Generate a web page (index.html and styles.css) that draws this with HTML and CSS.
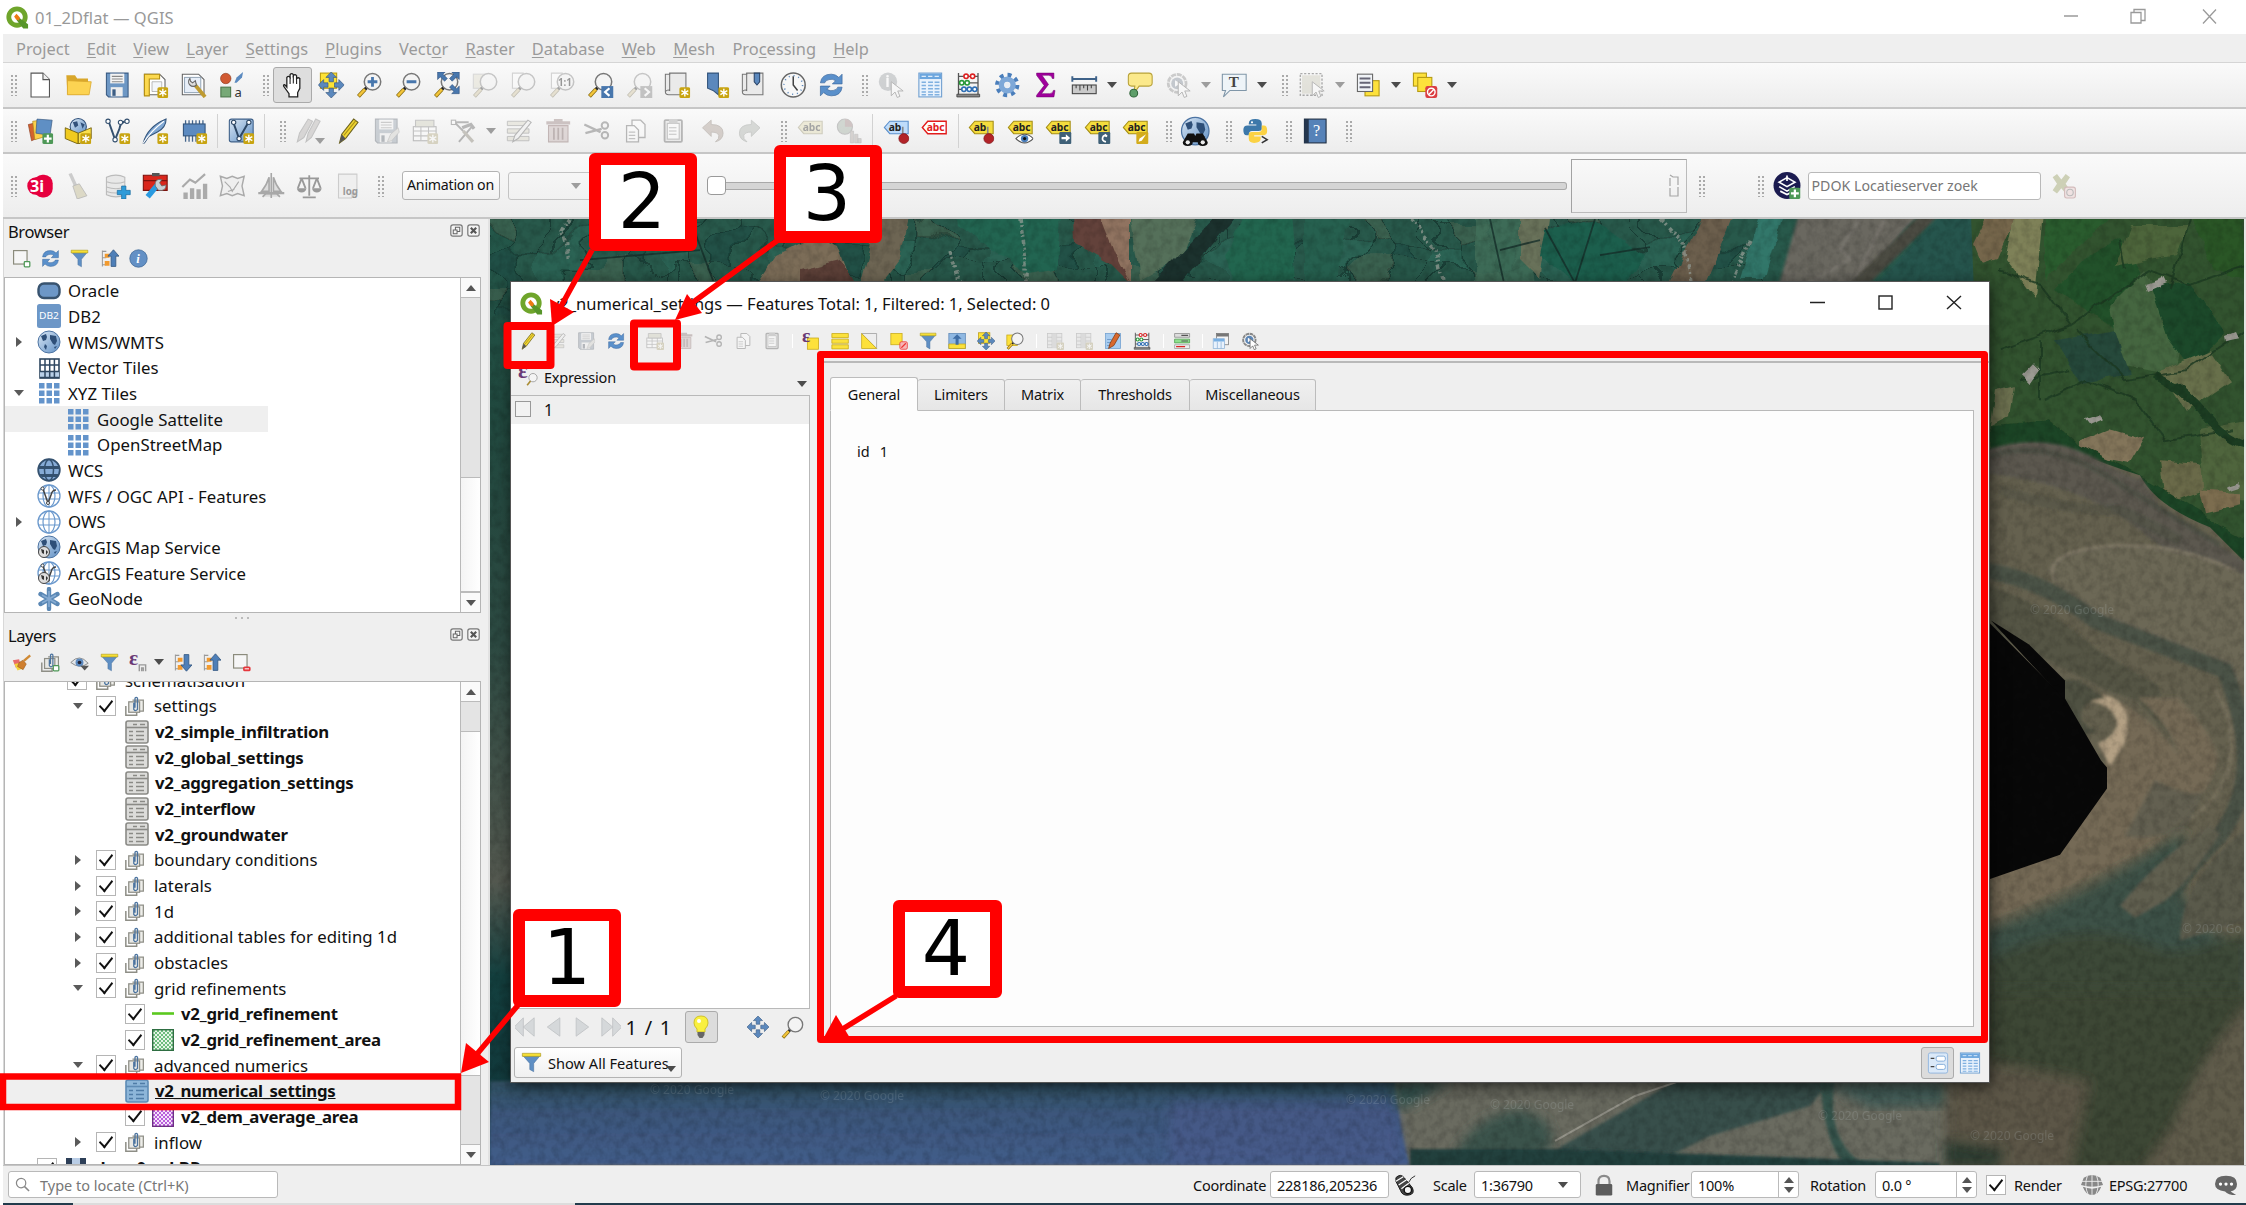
FILE: index.html
```html
<!DOCTYPE html>
<html lang="en">
<head>
<meta charset="utf-8">
<title>01_2Dflat — QGIS</title>
<link rel="stylesheet" href="styles.css">
</head>
<body>
<svg class="paints" width="0" height="0" aria-hidden="true">
<defs>
<linearGradient id="gb" x1="0" y1="0" x2="1" y2="1"><stop offset="0" stop-color="#dbe8f5"/><stop offset="1" stop-color="#5f8fc4"/></linearGradient>
<pattern id="hg" width="4" height="4" patternUnits="userSpaceOnUse"><path d="M0 0l4 4M4 0l-4 4" stroke="#4fae62" stroke-width=".8"/></pattern>
<pattern id="hp" width="4" height="4" patternUnits="userSpaceOnUse"><path d="M0 0l4 4M4 0l-4 4" stroke="#b34fd8" stroke-width=".9"/></pattern>
</defs>
</svg>
<svg class="defs" aria-hidden="true">
<symbol id="star" viewBox="0 0 24 24"><rect x="14" y="14" width="10" height="10" rx="1.5" fill="#c8a411"/><path d="M19 15.5v7M15.8 17.2l6.4 3.6M22.2 17.2l-6.4 3.6" stroke="#fff" stroke-width="1.3"/></symbol>
<symbol id="mag" viewBox="0 0 24 24"><path d="M10 14l-2 2" stroke="#222" stroke-width="3"/><path d="M8 16l-6 6.5" stroke="#8a6d10" stroke-width="3.6"/><path d="M8 16l-5.6 6" stroke="#f3c53a" stroke-width="2.2"/><circle cx="15" cy="9" r="7.6" fill="#f4f4f4" stroke="#777" stroke-width="1.4"/></symbol>
<symbol id="q" viewBox="0 0 24 24"><circle cx="11.5" cy="11.5" r="8.6" fill="none" stroke="#6fa52b" stroke-width="5"/><path d="M12 11l11 8v4.500h-5l-7-9z" fill="#57952a"/><path d="M11 8l3.500 4-1 3-3-1-2-3z" fill="#ee7913"/></symbol>
<symbol id="new" viewBox="0 0 24 24"><path d="M3.500 1h11l6 6v16h-17z" fill="#fff" stroke="#555"/><path d="M14.500 1v6h6" fill="#eee" stroke="#555"/></symbol>
<symbol id="open" viewBox="0 0 24 24"><path d="M1 3h8l2 3h10v15H2z" fill="#d9a72b"/><path d="M2 8l22 1-2 12H2z" fill="#fcd352" stroke="#d9a72b" stroke-width=".7"/></symbol>
<symbol id="save" viewBox="0 0 24 24"><path d="M2 1h20v22H4l-2-2z" fill="#6d97c4" stroke="#3c5d84"/><rect x="5.500" y="1.500" width="13" height="9" fill="#f4f4f4"/><path d="M7 4h10M7 6.500h10M7 9h10" stroke="#888" stroke-width="1"/><rect x="6" y="14" width="11" height="8.500" fill="#eee"/><rect x="7.500" y="16" width="3" height="6" fill="#3c5d84"/></symbol>
<symbol id="newlay" viewBox="0 0 24 24"><path d="M2 2h14l5 5v14H2z" fill="#fff" stroke="#666"/><path d="M2 2h14v4.500H6.500V22H2z" fill="#fcd94f" stroke="#b58f0f"/><path d="M9 9h9v9H9z" fill="#f3f6fa" stroke="#999" stroke-width=".6"/><use href="#star"/></symbol>
<symbol id="laymgr" viewBox="0 0 24 24"><path d="M1 2h15l5 5v14H1z" fill="#fff" stroke="#666"/><rect x="3" y="5" width="15" height="14" fill="#e7eef8" stroke="#9ab"/><path d="M12 11l10 12" stroke="#bf9b30" stroke-width="3.500"/><path d="M8 6a4 4 0 1 0 6 6l-1-4-2.500 2-2-1.500z" fill="#ddd" stroke="#666"/></symbol>
<symbol id="style" viewBox="0 0 24 24"><circle cx="6" cy="6" r="4.800" fill="#d15a32" stroke="#8d3c20" stroke-width=".6"/><path d="M14 10l2-5 6-5-1 5-5 5z" fill="#5b8ac0"/><rect x="1.500" y="14" width="9" height="9" fill="#77a977" stroke="#4b774b"/><text x="14" y="23" font-size="12" fill="#333">a</text></symbol>
<symbol id="hand" viewBox="0 0 24 24"><path d="M7 14V5q1.500-2 3 0V2.500q1.500-2 3 0V3.500q1.500-2 3 0V6q1.500-1.500 3 0v9l-2 4v4H9v-3l-5-7q0-3 3 1z" fill="#fff" stroke="#222" stroke-width="1.200"/><path d="M10 5v6M13 3.500v7M16 5v6" stroke="#222"/></symbol>
<symbol id="arr4" viewBox="0 0 24 24"><path d="M12 0l5 5h-3v4h-4V5H7zM12 24l5-5h-3v-4h-4v4H7zM0 12l5-5v3h4v4H5v3zM24 12l-5-5v3h-4v4h4v3z" fill="#5b88bd" stroke="#34557c" stroke-width=".6"/></symbol>
<symbol id="pan" viewBox="0 0 24 24"><rect x="2" y="1" width="15" height="14" fill="#fde335" stroke="#bb9b10"/><use href="#arr4"/></symbol>
<symbol id="zin" viewBox="0 0 24 24"><use href="#mag"/><path d="M15 4.500v9M10.500 9h9" stroke="#4877ad" stroke-width="2.600"/></symbol>
<symbol id="zout" viewBox="0 0 24 24"><use href="#mag"/><path d="M10.500 9h9" stroke="#4877ad" stroke-width="2.800"/></symbol>
<symbol id="zfull" viewBox="0 0 24 24"><use href="#mag"/><path d="M4 0h7l-2 2 4 4-2.500 2.500-4-4-2.500 2.500zM24 0h-7l2 2-4 4 2.500 2.500 4-4L24 7zM24 20h-7l2-2-4-4 2.500-2.500 4 4L24 13z" fill="#4877ad" stroke="#2c4d77" stroke-width=".5"/></symbol>
<symbol id="zsel" viewBox="0 0 24 24"><rect x="1" y="2" width="13" height="13" fill="#e8dc9a" stroke="#aaa"/><use href="#mag"/></symbol>
<symbol id="zlay" viewBox="0 0 24 24"><path d="M2 1h10v14H2z" fill="#fff" stroke="#999"/><use href="#mag"/></symbol>
<symbol id="znat" viewBox="0 0 24 24"><use href="#zlay"/><text x="8" y="12.500" font-size="9" font-weight="bold">1:1</text></symbol>
<symbol id="zlast" viewBox="0 0 24 24"><use href="#mag"/><rect x="13" y="13" width="11" height="11" fill="#4877ad"/><path d="M20.500 15l-4 3.500 4 3.500" fill="none" stroke="#fff" stroke-width="2"/></symbol>
<symbol id="znext" viewBox="0 0 24 24"><use href="#mag"/><rect x="13" y="13" width="11" height="11" fill="#777"/><path d="M17 15l4 3.500-4 3.500" fill="none" stroke="#fff" stroke-width="2"/></symbol>
<symbol id="scroll" viewBox="0 0 24 24"><path d="M5 1h15v20H4q-3 0-3-3V2h4z" fill="#eaeaea" stroke="#777"/><path d="M5 1v16q-2-1-4 1" fill="none" stroke="#777"/></symbol>
<symbol id="newmap" viewBox="0 0 24 24"><use href="#scroll"/><use href="#star"/></symbol>
<symbol id="bmnew" viewBox="0 0 24 24"><path d="M4 1h10v20l-5-4-5-2z" fill="#5b88bd" stroke="#34557c"/><use href="#star"/></symbol>
<symbol id="bm" viewBox="0 0 24 24"><use href="#scroll"/><path d="M12 1h5v8l-2.500 3L12 9z" fill="#5b88bd" stroke="#2a4468"/></symbol>
<symbol id="clock" viewBox="0 0 24 24"><circle cx="12" cy="12" r="11" fill="#f7f7f7" stroke="#666" stroke-width="1.400"/><path d="M12 4v8l4 5" fill="none" stroke="#444" stroke-width="1.400"/><circle cx="12" cy="12" r="8.600" fill="none" stroke="#5b88bd" stroke-dasharray="1 3.500" stroke-width="1.400"/></symbol>
<symbol id="refresh" viewBox="0 0 24 24"><path d="M2 10q1-8 10-8 4 0 7 3l3-3v9h-9l3-3q-3-2-6-1-4 1-4 3z" fill="#5a90cb" stroke="#37649a" stroke-width=".6"/><path d="M22 14q-1 8-10 8-4 0-7-3l-3 3v-9h9l-3 3q3 2 6 1 4-1 4-3z" fill="#5a90cb" stroke="#37649a" stroke-width=".6"/></symbol>
<symbol id="cur" viewBox="0 0 24 24"><path d="M12 9v13l3.500-3.500 2 5 2.500-1-2-5h5z" fill="#fff" stroke="#555" stroke-width=".9"/></symbol>
<symbol id="ident" viewBox="0 0 24 24"><circle cx="9" cy="9" r="8.500" fill="#8a99a8"/><text x="6.500" y="14" font-size="14" font-weight="bold" fill="#fff">i</text><use href="#cur"/></symbol>
<symbol id="table" viewBox="0 0 24 24"><rect x="1.500" y="1" width="21" height="22" fill="#e9f2fc" stroke="#6f9fd0"/><rect x="2" y="1.500" width="20" height="5" fill="#6ca6de"/><path d="M4 4h4M10 4h4M16 4h4" stroke="#dcebfa"/><path d="M4 9.500h4M10 9.500h4.500M16 9.500h4.500M4 12.500h4M10 12.500h4.500M16 12.500h4.500M4 15.500h4M10 15.500h4.500M16 15.500h4.500M4 18.500h4M10 18.500h4.500M16 18.500h4.500M4 21h4M10 21h4.500M16 21h4.500" stroke="#7fb0e0" stroke-width="1.300"/></symbol>
<symbol id="aba" viewBox="0 0 24 24"><path d="M3 1v21M21 1v21M3 4h18M3 10h18M3 16h18" fill="none" stroke="#555" stroke-width="1.200"/><path d="M1.500 20.500h21v2.500h-21z" fill="#888" stroke="#444" stroke-width=".8"/><g fill="#fff" stroke-width="1.500"><g stroke="#d22"><circle cx="10" cy="4" r="2"/><circle cx="16" cy="4" r="2"/></g><g stroke="#2a9a3a"><circle cx="6" cy="10" r="2"/><circle cx="11" cy="10" r="2"/></g><g stroke="#2f6fb5"><circle cx="8" cy="16" r="2"/><circle cx="13" cy="16" r="2"/><circle cx="18" cy="16" r="2"/></g></g></symbol>
<symbol id="gear" viewBox="0 0 24 24"><circle cx="12" cy="12" r="9.200" fill="none" stroke="#4a7ebb" stroke-width="4" stroke-dasharray="3.600 3.620"/><circle cx="12" cy="12" r="5.400" fill="none" stroke="#7ea8d8" stroke-width="5"/><circle cx="12" cy="12" r="2.600" fill="#e9eef5"/></symbol>
<symbol id="sum" viewBox="0 0 24 24"><path d="M4 1h16v5h-1.500Q18 3 15 3H9l6 8.500L8.500 20H16q3 0 3.500-3H21l-1 6H4v-1.500l7-9L4 3z" fill="#a0009c" stroke="#70006d" stroke-width=".5"/></symbol>
<symbol id="ruler" viewBox="0 0 24 24"><path d="M1 6.500h22M1 4v5M23 4v5" stroke="#3e6289" stroke-width="1.800"/><rect x="1" y="12" width="22" height="8" fill="#c9c9c9" stroke="#444"/><path d="M4.500 12v3M8 12v5M11.500 12v3M15 12v5M18.500 12v3" stroke="#444"/></symbol>
<symbol id="tip" viewBox="0 0 24 24"><path d="M4 1h16q3 0 3 3v6q0 3-3 3H11l-5 7 1-7H4q-3 0-3-3V4q0-3 3-3z" fill="#fbe98b" stroke="#b8a23a"/><circle cx="6" cy="19.500" r="3.600" fill="#5e9e6a" stroke="#33663c"/></symbol>
<symbol id="run" viewBox="0 0 24 24"><circle cx="11" cy="10.500" r="8" fill="#e4e8ea" stroke="#888" stroke-width="3" stroke-dasharray="4.500 .8"/><circle cx="11" cy="10.500" r="7" fill="#f1f1f1"/><circle cx="11" cy="10.500" r="5.500" fill="#5d86b5"/><path d="M9 7.500l5 3-5 3z" fill="#fff"/><use href="#cur"/></symbol>
<symbol id="tann" viewBox="0 0 24 24"><path d="M1 2h22v15H8l-6 6 2-6H1z" fill="#eef4f8" stroke="#8096a8"/><text x="7" y="14" font-size="14" font-weight="bold" font-family="Liberation Serif,serif" fill="#444">T</text></symbol>
<symbol id="sel" viewBox="0 0 24 24"><rect x="1" y="1.500" width="20" height="20" fill="none" stroke="#333" stroke-width="1.300" stroke-dasharray="2 1.500"/><rect x="2.500" y="3" width="17" height="17" fill="#cfc88c"/><use href="#cur"/></symbol>
<symbol id="self" viewBox="0 0 24 24"><rect x="9" y="8" width="13" height="14" fill="#fde13b" stroke="#b59a12"/><rect x="2" y="2" width="14" height="16" fill="#f0f3f7" stroke="#666"/><path d="M4 6h10M4 10h10M4 14h10" stroke="#667" stroke-width="1.800"/></symbol>
<symbol id="desel" viewBox="0 0 24 24"><rect x="2" y="1" width="12" height="12" fill="#fde13b" stroke="#b59a12"/><rect x="6" y="5" width="13" height="13" fill="#fde13b" stroke="#b59a12"/><rect x="13" y="13" width="11" height="11" rx="2" fill="#db3d42"/><circle cx="18.500" cy="18.500" r="3.500" fill="none" stroke="#fff" stroke-width="1.300"/><path d="M16 21l5-5" stroke="#fff" stroke-width="1.300"/></symbol>
<symbol id="plus" viewBox="0 0 24 24"><rect x="14" y="14" width="10" height="10" rx="1.500" fill="#4e9857"/><path d="M19 15.500v7M15.500 19h7" stroke="#fff" stroke-width="2"/></symbol>
<symbol id="dsm" viewBox="0 0 24 24"><path d="M1 6l9-2 3 13-9 4z" fill="#d3622d" stroke="#8d3c20" stroke-width=".6"/><path d="M5 3l8-1 4 15-10 3z" fill="#fbd04b" stroke="#a8861d" stroke-width=".6"/><path d="M9 1l14 1-2 14-13-2z" fill="#5f8fc4" stroke="#37567d" stroke-width=".6"/><use href="#plus"/></symbol>
<symbol id="box" viewBox="0 0 24 24"><circle cx="12" cy="8" r="7.500" fill="url(#gb)" stroke="#31507a"/><path d="M7 4l4-1 1 4-3 2zM14 4l4 2-2 4z" fill="#31507a"/><path d="M0 9l12 5v10L0 19z" fill="#f0ca1f" stroke="#6d5a08" stroke-width=".8"/><path d="M24 9l-12 5v10l12-5z" fill="#fbe04c" stroke="#6d5a08" stroke-width=".8"/><use href="#star"/></symbol>
<symbol id="vec" viewBox="0 0 24 24"><path d="M4 3l6 17 4-10q1-7 7-7" fill="none" stroke="#34506f" stroke-width="1.800"/><g fill="#fff" stroke="#34506f"><circle cx="3.500" cy="3" r="2"/><circle cx="10" cy="20" r="2"/><circle cx="15" cy="4" r="2"/><circle cx="21" cy="3" r="2"/></g><use href="#star"/></symbol>
<symbol id="feather" viewBox="0 0 24 24"><path d="M1 23Q5 8 22 1q0 8-8 12l-8 4-4 6z" fill="#80a8d4" stroke="#34557c"/><path d="M1 23Q8 12 20 3" stroke="#fff" fill="none"/><use href="#star"/></symbol>
<symbol id="chip" viewBox="0 0 24 24"><path d="M4 2v20M7.200 2v20M10.400 2v20M13.600 2v20M16.800 2v20M20 2v20" stroke="#44658c" stroke-width="1.200"/><rect x="2" y="5.500" width="20" height="11" fill="#5c8ac0" stroke="#34557c"/><use href="#star"/></symbol>
<symbol id="newv" viewBox="0 0 24 24"><rect x="1" y="1" width="22" height="21" rx="2" fill="url(#gb)" stroke="#3d5f88"/><path d="M5 5l5 14 8-14" fill="none" stroke="#2d4765" stroke-width="1.800"/><g fill="#fff" stroke="#2d4765"><circle cx="5" cy="4" r="2"/><circle cx="10" cy="19" r="2"/><circle cx="19" cy="4" r="2"/></g><use href="#star"/></symbol>
<symbol id="pen" viewBox="0 0 24 24"><path d="M4 23l2-8L17 1l4 3L9.500 19z" fill="#f2d631" stroke="#6e6420"/><path d="M4 23l2-8 3.500 4z" fill="#555"/><path d="M8 16L19 2.500" stroke="#a9931a"/></symbol>
<symbol id="pens" viewBox="0 0 24 24"><path d="M1 22l2-8L11 1l4 2L7 18zM9 22l2-8 7-13 4 2-8 15z" fill="#b3a5a0" stroke="#777"/></symbol>
<symbol id="savee" viewBox="0 0 24 24"><use href="#save"/><path d="M13 22l3-7 7-6 1 4-7 8z" fill="#ccb" stroke="#777" stroke-width=".6"/></symbol>
<symbol id="addrec" viewBox="0 0 24 24"><rect x="1" y="8" width="21" height="13" fill="#fff" stroke="#666"/><path d="M3 2h17v6H3z" fill="#cc8" stroke="#777"/><path d="M1 12h21M1 16.500h21M8 8v13M15 8v13" stroke="#777"/><use href="#star"/></symbol>
<symbol id="vert" viewBox="0 0 24 24"><path d="M3 4h14M4 4l8 8M8 22l12-14" stroke="#555" stroke-width="1.800"/><path d="M12 12l9 10" stroke="#887744" stroke-width="3"/><path d="M11 9l8-3 3 4" fill="none" stroke="#555" stroke-width="3"/><rect x="1" y="2" width="4" height="4" fill="#fff" stroke="#555"/></symbol>
<symbol id="multi" viewBox="0 0 24 24"><path d="M1 3h20v4H1zM1 10h20v4H1zM1 17h20v4H1z" fill="#ddd49a" stroke="#666" stroke-width=".8"/><path d="M6 22l2-6L20 2l3 2L11 19z" fill="#eee" stroke="#555"/></symbol>
<symbol id="trash" viewBox="0 0 24 24"><path d="M3 7h18v15H3z" fill="#e4a09e" stroke="#b04541"/><path d="M1 3h22v3H1zM8 1h8v2H8z" fill="#b96360"/><path d="M8 9v11M12 9v11M16 9v11" stroke="#96403c" stroke-width="1.600"/></symbol>
<symbol id="cut" viewBox="0 0 24 24"><path d="M1 6l15 7M2 14l15-4" stroke="#555" stroke-width="2.200"/><circle cx="20" cy="7" r="3" fill="none" stroke="#555" stroke-width="1.800"/><circle cx="20" cy="16" r="3" fill="none" stroke="#555" stroke-width="1.800"/></symbol>
<symbol id="copy" viewBox="0 0 24 24"><path d="M9 2h8l4 4v12H9z" fill="#fff" stroke="#555" stroke-width="1.200"/><path d="M4 7h7l4 4v11H4z" fill="#fff" stroke="#555" stroke-width="1.200"/><path d="M6 13h6M6 16h6M6 19h6" stroke="#777"/></symbol>
<symbol id="paste" viewBox="0 0 24 24"><rect x="4" y="2" width="16" height="20" rx="1" fill="#ddd" stroke="#555" stroke-width="1.700"/><rect x="6.500" y="5" width="11" height="14.500" fill="#fff" stroke="#777"/><path d="M8 1h8v4H8z" fill="#999"/><path d="M8 9h7M8 12h7M8 15h7" stroke="#777"/></symbol>
<symbol id="undo" viewBox="0 0 24 24"><path d="M3 9l8-7v4q11 0 11 8 0 6-7 8 4-3 3-6t-7-3v4z" fill="#c58b66" stroke="#8d6744" stroke-width=".8"/></symbol>
<symbol id="redo" viewBox="0 0 24 24"><path d="M21 9l-8-7v4Q2 6 2 14q0 6 7 8-4-3-3-6t7-3v4z" fill="#9fae9c" stroke="#788875" stroke-width=".8"/></symbol>
<symbol id="tagy" viewBox="0 0 24 24"><path d="M6 3h17v11.500H6L1 8.700z" fill="#f4dc3d" stroke="#a58e14"/><text x="5" y="12.300" font-size="9.500" font-weight="bold" fill="#222">abc</text></symbol>
<symbol id="tagr" viewBox="0 0 24 24"><path d="M6 3h17v11.500H6L1 8.700z" fill="#fff" stroke="#e21c1c" stroke-width="1.300"/><text x="5" y="12.300" font-size="9.500" font-weight="bold" fill="#e21c1c">abc</text></symbol>
<symbol id="ball" viewBox="0 0 24 24"><path d="M18 8v9" stroke="#888" stroke-width="1.500"/><circle cx="19" cy="19" r="4.600" fill="#b22328" stroke="#7c1215" stroke-width=".6"/></symbol>
<symbol id="tagb" viewBox="0 0 24 24"><path d="M6 3h17v11.500H6L1 8.700z" fill="#bfdcfb" stroke="#5a8fcb"/><text x="5" y="12.300" font-size="9.500" font-weight="bold" fill="#222">ab</text><use href="#ball"/></symbol>
<symbol id="tagyb" viewBox="0 0 24 24"><path d="M6 3h17v11.500H6L1 8.700z" fill="#f4dc3d" stroke="#a58e14"/><text x="5" y="12.300" font-size="9.500" font-weight="bold" fill="#222">ab</text><use href="#ball"/></symbol>
<symbol id="eye" viewBox="0 0 24 24"><path d="M8 19q8-8 16 0-8 8-16 0z" fill="#fff" stroke="#555"/><circle cx="16" cy="19" r="3.400" fill="#4a7ebb"/><circle cx="16" cy="19" r="1.500" fill="#111"/></symbol>
<symbol id="tage" viewBox="0 0 24 24"><use href="#tagy"/><use href="#eye"/></symbol>
<symbol id="tagm" viewBox="0 0 24 24"><use href="#tagy"/><rect x="13" y="13" width="11" height="11" rx="1" fill="#3f6077"/><path d="M15 17.500h4V15l4 3.500-4 3.500v-2.500h-4z" fill="#fff"/></symbol>
<symbol id="tagt" viewBox="0 0 24 24"><use href="#tagy"/><rect x="13" y="13" width="11" height="11" rx="1" fill="#3f6077"/><path d="M20 22q-4-1-3-4t4-1l-2-2" fill="none" stroke="#fff" stroke-width="1.600"/></symbol>
<symbol id="tagp" viewBox="0 0 24 24"><use href="#tagy"/><rect x="13" y="13" width="11" height="11" rx="1" fill="#d3ac1c"/><path d="M15 22l1-3 6-4-4 6z" fill="#fff"/></symbol>
<symbol id="pie" viewBox="0 0 24 24"><circle cx="8" cy="8" r="7" fill="#7fae7f" stroke="#777"/><path d="M8 8V1a7 7 0 0 1 7 7z" fill="#c66"/><path d="M13 12h3v11h-3zM17 15h3v8h-3zM20 19h3v4h-3z" fill="#b98" stroke="#777" stroke-width=".6"/></symbol>
<symbol id="globe" viewBox="0 0 24 24"><circle cx="12" cy="12" r="11" fill="url(#gb)" stroke="#4d74a3"/><path d="M4 6l5-2 1 3-1 3-3 1zM13 5l6 1 1 5-2 4-2-1-3-5zM8 14l2 2-1 4-2-3zM17 17l3-1-2 3z" fill="#2e4f78"/></symbol>
<symbol id="bino" viewBox="0 0 24 24"><use href="#globe"/><path d="M6 14h5l1 2 1-2h5l4 7q0 3-4 3t-4-3h-4q0 3-4 3t-4-3z" fill="#111"/><circle cx="6" cy="21" r="1.700" fill="#eee"/><circle cx="18" cy="21" r="1.700" fill="#eee"/></symbol>
<symbol id="py" viewBox="0 0 24 24"><path d="M6 5q0-4 6-4t6 4v5q0 2-3 2H9q-3 0-3 4H4q-3 0-3-5 0-4 4-4h8V6H6z" fill="#3c78aa"/><path d="M18 7h2q3 0 3 5 0 4-4 4h-8v1h6v2q0 4-6 4-5 0-5-4v-4q0-2 3-2h6q3 0 3-3z" fill="#fbd244"/><circle cx="9" cy="4" r="1" fill="#fff"/><path d="M18 17l5 3-5 3" stroke="#333" fill="none" stroke-width="1.400"/></symbol>
<symbol id="help" viewBox="0 0 24 24"><rect x="2" y="1" width="20" height="22" fill="#5682b8" stroke="#1f2e42"/><path d="M2 1h4v22H2z" fill="#24364e"/><text x="10" y="17" font-size="15" font-family="Liberation Serif,serif" fill="#fff">?</text></symbol>
<symbol id="i3" viewBox="0 0 24 24"><circle cx="8" cy="12" r="8" fill="#e6003e"/><rect x="6" y="1.500" width="17.500" height="21" rx="8" fill="#e6003e"/><text x="2.500" y="17.500" font-size="15" font-weight="bold" fill="#fff">3i</text></symbol>
<symbol id="broom" viewBox="0 0 24 24"><path d="M3 1l3-1 5 11-3 1z" fill="#bbb"/><path d="M7 12l6-2 7 11-9 3z" fill="#d4cfb4" stroke="#999" stroke-width=".7"/></symbol>
<symbol id="db" viewBox="0 0 24 24"><path d="M2 4q9-4 17 0v16q-8 4-17 0z" fill="#e8e8e8" stroke="#bbb"/><path d="M2 8q9 3 17 0M2 13q9 3 17 0M2 17q9 3 17 0" fill="none" stroke="#bbb"/><path d="M16 12h4v4h4v4h-4v4h-4v-4h-4v-4h4z" fill="#2f9bd8" stroke="#16679a" stroke-width=".6"/></symbol>
<symbol id="tbx" viewBox="0 0 24 24"><path d="M1 2h22v14H1z" fill="#d9261c" stroke="#7c120c"/><path d="M1 7h22" stroke="#7c120c"/><path d="M9 0h7v3H9z" fill="#555"/><path d="M5 22l9-11" stroke="#2a9ae0" stroke-width="5"/><path d="M12 12q-1-7 6-6l-2 3 2 3 4-1q0 6-7 5z" fill="#c9d0d5" stroke="#666" stroke-width=".7"/></symbol>
<symbol id="chart" viewBox="0 0 24 24"><path d="M2 18h4v6H2zM8 14h4v10H8zM14 15h4v9h-4zM20 10h4v14h-4z" fill="#aaa"/><path d="M1 13l7-7 5 3 9-8" fill="none" stroke="#aaa" stroke-width="2"/></symbol>
<symbol id="mapi" viewBox="0 0 24 24"><path d="M1 3l6 2 5-2 5 2 6-2-2 9 2 9-6-2-5 2-5-2-6 2 2-9z" fill="#efefef" stroke="#aaa" stroke-width="1.300"/><path d="M5 8l5 5 2 4 6-9M8 17l6-2" fill="none" stroke="#aaa"/></symbol>
<symbol id="sail" viewBox="0 0 24 24"><path d="M12 0v23M10 4v13H3q5-6 7-13zM14 4v13h7q-5-6-7-13zM4 22l3-3h10l3 3" fill="#ddd" stroke="#a8a8a8" stroke-width="1.500"/><path d="M0 18.500h24" stroke="#a8a8a8" stroke-width="2"/></symbol>
<symbol id="bal" viewBox="0 0 24 24"><path d="M12 2v19M6 22.500h12M3 5h18M5 5L1.500 14M5 5l3.500 9M19 5l-3.500 9M19 5l3.500 9" stroke="#999" stroke-width="1.700"/><path d="M.5 14h9q-1 4-4.500 4T.5 14zM14.500 14h9q-1 4-4.500 4t-4.500-4z" fill="#999"/></symbol>
<symbol id="log" viewBox="0 0 24 24"><path d="M3 1h17v17l-5 5H3z" fill="#efefef" stroke="#ccc"/><path d="M20 18h-5v5z" fill="#ccc"/><text x="7" y="20" font-size="9" font-weight="bold" fill="#999">log</text></symbol>
<symbol id="pdok" viewBox="0 0 24 24"><circle cx="12" cy="12" r="12" fill="#1b1b50"/><path d="M12 3v5M5 9l7-4 7 4-7 4zM5 13l7 4 7-4M6 17l6 3 6-3" fill="none" stroke="#fff" stroke-width="1.500"/><use href="#plus"/></symbol>
<symbol id="clrx" viewBox="0 0 24 24"><path d="M2 4l4-3 4 5 4-5 4 3-4 6 4 6-4 3-4-5-4 5-4-3 4-6z" fill="#cdd0b6"/><rect x="13" y="13" width="10" height="10" rx="2" fill="#efe2e2" stroke="#d3bcbc"/><circle cx="18" cy="18" r="3" fill="none" stroke="#bbb"/></symbol>
<symbol id="addl" viewBox="0 0 24 24"><rect x="2" y="2" width="17" height="17" fill="#f6f6f6" stroke="#8b8b7c" stroke-width="1.500"/><rect x="15.500" y="16" width="7" height="6.500" rx="1" fill="#fff" stroke="#4e9857" stroke-width="1.600"/></symbol>
<symbol id="reml" viewBox="0 0 24 24"><rect x="2" y="2" width="17" height="17" fill="#f6f6f6" stroke="#8b8b7c" stroke-width="1.500"/><rect x="14" y="17" width="9.500" height="6" rx="2" fill="#e5373c"/><path d="M16 20h5.500" stroke="#fff" stroke-width="1.300"/></symbol>
<symbol id="fun" viewBox="0 0 24 24"><path d="M2 4h20l-7.500 9v9.500L10 20v-7z" fill="#5f8fc4" stroke="#49719e" stroke-width=".6"/><path d="M1.500 1.500h21v3.500h-21z" fill="#f6df35" stroke="#a6921a" stroke-width=".7"/></symbol>
<symbol id="treeu" viewBox="0 0 24 24"><path d="M3 2v20M3 3h5M3 11h5M3 20h5" stroke="#999" stroke-width="1.300"/><path d="M6 6h6v5H6zM6 15h6v6H6z" fill="#f29a2e"/><path d="M17 1l7 8h-4v13h-6V9h-4z" fill="#4e7fb8" stroke="#33567f"/></symbol>
<symbol id="treed" viewBox="0 0 24 24"><path d="M3 2v20M3 3h5M3 11h5M3 20h5" stroke="#999" stroke-width="1.300"/><path d="M6 6h6v5H6zM6 15h6v6H6z" fill="#f29a2e"/><path d="M17 23l7-8h-4V2h-6v13h-4z" fill="#4e7fb8" stroke="#33567f"/></symbol>
<symbol id="info" viewBox="0 0 24 24"><circle cx="12" cy="12" r="11" fill="#6390c5" stroke="#426a99"/><text x="9" y="18" font-size="16" font-weight="bold" font-style="italic" font-family="Liberation Serif,serif" fill="#fff">i</text></symbol>
<symbol id="brush" viewBox="0 0 24 24"><path d="M1 9l8-1 2 8-6 3z" fill="#e86a6a"/><path d="M3 14l10-2v8l-6 2z" fill="#f5d23c"/><path d="M9 12l5-3 4 5-4 7-7-4z" fill="#cf7f2f" stroke="#935313" stroke-width=".7"/><path d="M15 10l8-7" stroke="#d08a35" stroke-width="3"/></symbol>
<symbol id="grp" viewBox="0 0 24 24"><path d="M1 12v11h13v-4" fill="none" stroke="#8e8e86" stroke-width="1.800"/><path d="M9 5h13v13h-4" fill="#eeeeea" stroke="#8e8e86" stroke-width="1.500"/><rect x="4.500" y="7" width="13" height="12.500" fill="#e8e8e4" stroke="#8e8e86" stroke-width="1.500"/><path d="M10.500 8v8q2 3 4.500 0V2.500q-1.500-2-3 0V14" fill="none" stroke="#4b739f" stroke-width="1.500"/></symbol>
<symbol id="grpadd" viewBox="0 0 24 24"><use href="#grp"/><rect x="15.500" y="16" width="7" height="6.500" rx="1" fill="#fff" stroke="#4e9857" stroke-width="1.600"/></symbol>
<symbol id="veye" viewBox="0 0 24 24"><path d="M1 12q11-12 22 1-11 8-22-1z" fill="#e2e5e8" stroke="#777"/><circle cx="12" cy="12" r="5" fill="#5c8ac0"/><circle cx="12" cy="12" r="2.300" fill="#223"/><path d="M13 16h11l-5.500 6z" fill="#555"/></symbol>
<symbol id="eps" viewBox="0 0 24 24"><text x="0" y="15" font-size="27" font-weight="bold" font-family="Liberation Serif,serif" fill="#6a3a76">ε</text><path d="M13 23v-8h8v8M16 23v-4h2v4" fill="none" stroke="#999" stroke-width="1.800"/></symbol>
<symbol id="epsm" viewBox="0 0 24 24"><text x="0" y="14" font-size="27" font-weight="bold" font-family="Liberation Serif,serif" fill="#6a3a76">ε</text><circle cx="18" cy="14" r="5" fill="#f4f4f4" stroke="#999"/><path d="M15 18l-4 5" stroke="#a98b32" stroke-width="2"/></symbol>
<symbol id="epss" viewBox="0 0 24 24"><rect x="7" y="8" width="15" height="15" fill="#fde13b" stroke="#c5a817"/><text x="0" y="13" font-size="26" font-weight="bold" font-family="Liberation Serif,serif" fill="#6a3a76">ε</text></symbol>
<symbol id="selall" viewBox="0 0 24 24"><path d="M1 2h22v5.500H1zM1 9.500h22V15H1zM1 17h22v5.500H1z" fill="#fbe13c" stroke="#c5a817"/></symbol>
<symbol id="inv" viewBox="0 0 24 24"><path d="M2 2h20v20z" fill="#eee" stroke="#999"/><path d="M2 2v20h20z" fill="#fde13b" stroke="#c5a817"/></symbol>
<symbol id="dsl" viewBox="0 0 24 24"><rect x="1" y="2" width="15" height="15" fill="#fde13b" stroke="#c5a817"/><rect x="13" y="13" width="10" height="10" rx="2" fill="#f6b7b7" stroke="#e33"/><path d="M15 21l6-6" stroke="#e33" stroke-width="1.500"/></symbol>
<symbol id="mtop" viewBox="0 0 24 24"><rect x="1" y="2" width="22" height="20" fill="#8fb8e2" stroke="#5b86b5"/><path d="M1 16h22v6H1z" fill="#fbe13c" stroke="#c5a817"/><path d="M12 3l6 6h-4v8h-4V9H6z" fill="#3f6ea6"/></symbol>
<symbol id="zys" viewBox="0 0 24 24"><rect x="1" y="4" width="14" height="14" fill="#fde13b" stroke="#c5a817"/><use href="#mag"/></symbol>
<symbol id="form" viewBox="0 0 24 24"><rect x="2" y="2" width="19" height="19" fill="#ddd" stroke="#888"/><path d="M2 7h19M2 12h19M2 17h19M8 2v19M14 2v19" stroke="#888"/><path d="M8 2h6v19H8z" fill="#bbb"/><use href="#star"/></symbol>
<symbol id="fedit" viewBox="0 0 24 24"><rect x="2" y="2" width="20" height="20" fill="#a8ccef" stroke="#6f9fd0"/><path d="M4 10h6M4 14h6M4 18h6" stroke="#5d8cbf"/><path d="M6 22l2-7L16 1l5 3-8 14z" fill="#d8682d" stroke="#7f3913"/></symbol>
<symbol id="cond" viewBox="0 0 24 24"><path d="M2 2h20v5H2z" fill="#ddd" stroke="#888"/><path d="M2 9.500h20v5H2z" fill="#8fe08f" stroke="#4b9c4b"/><path d="M2 17h20v5H2z" fill="#eee" stroke="#999"/><path d="M11 4.500h9M11 12h9" stroke="#555" stroke-width="1.500"/><path d="M4 19.500h12" stroke="#d22" stroke-width="1.500"/></symbol>
<symbol id="dock" viewBox="0 0 24 24"><rect x="6" y="2" width="16" height="15" fill="#f4f4f4" stroke="#777"/><path d="M6 2h16v4H6z" fill="#777"/><rect x="1.500" y="9" width="15" height="13" fill="#e9f2fc" stroke="#8db2d8"/><path d="M2 9h14v3.500H2z" fill="#79b0e3"/><path d="M7 13v9M12 13v9" stroke="#8db2d8"/></symbol>
<symbol id="lay" viewBox="0 0 24 24"><rect x="1" y="1" width="22" height="22" rx="2" fill="#dcdcda" stroke="#8a8a86" stroke-width="1.600"/><path d="M1 7.500h22" stroke="#8a8a86" stroke-width="1.600"/><path d="M8 4.500h4M15 4.500h5M4 11.500h4M11 11.500h8M4 15.500h4M11 15.500h8M4 19.500h4M11 19.500h8" stroke="#8a8a86" stroke-width="1.500"/></symbol>
<symbol id="layb" viewBox="0 0 24 24"><rect x="1" y="1" width="22" height="22" rx="2" fill="#8db6d9" stroke="#5d8bb5" stroke-width="1.600"/><path d="M1 7.500h22" stroke="#5d8bb5" stroke-width="1.600"/><path d="M8 4.500h4M15 4.500h5M4 11.500h4M11 11.500h8M4 15.500h4M11 15.500h8M4 19.500h4M11 19.500h8" stroke="#4f7ca7" stroke-width="1.500"/></symbol>
<symbol id="ora" viewBox="0 0 24 24"><rect x="1.500" y="4.500" width="21" height="14.500" rx="5.500" fill="#6d97c7" stroke="#38536f" stroke-width="2.400"/></symbol>
<symbol id="db2" viewBox="0 0 24 24"><rect x="0" y="0" width="24" height="24" rx="2.500" fill="#6d97c7"/><text x="2" y="15" font-size="9" textLength="20" lengthAdjust="spacingAndGlyphs" fill="#fff">DB2</text></symbol>
<symbol id="vt" viewBox="0 0 24 24"><rect x="3" y="3" width="19" height="19" fill="#fff" stroke="#2f4760" stroke-width="1.600"/><path d="M3 15.500h19v6H3z" fill="#b9d0e8"/><path d="M3 9h19M3 15.500h19M3 21.500h19M8 3v19M12.700 3v19M17.400 3v19" stroke="#2f4760" stroke-width="1.500"/></symbol>
<symbol id="xyz" viewBox="0 0 24 24"><path d="M2 2h5.500v5.500H2zM9.500 2H15v5.500H9.500zM17 2h5.500v5.500H17zM2 9.500h5.500V15H2zM9.500 9.500H15V15H9.500zM17 9.500h5.500V15H17zM2 17h5.500v5.500H2zM9.500 17H15v5.500H9.500zM17 17h5.500v5.500H17z" fill="#6494cb"/></symbol>
<symbol id="wcs" viewBox="0 0 24 24"><circle cx="12" cy="12" r="10.800" fill="#86abd6" stroke="#34516f" stroke-width="1.800"/><path d="M2 8h20v3H2zM2 16h19v3H5z" fill="#34516f"/><ellipse cx="12" cy="12" rx="4.500" ry="10.500" fill="none" stroke="#34516f" stroke-width="1.500"/></symbol>
<symbol id="ows" viewBox="0 0 24 24"><circle cx="12" cy="12" r="11" fill="#fff" stroke="#6b99cd" stroke-width="1.300"/><path d="M1.500 9h21M1.500 15h21M12 1v22" stroke="#6b99cd"/><ellipse cx="12" cy="12" rx="6" ry="11" fill="none" stroke="#6b99cd" stroke-width="1.200"/></symbol>
<symbol id="wfs" viewBox="0 0 24 24"><use href="#ows"/><path d="M6 5l5 14 3-8q1-5 5-5" fill="none" stroke="#444" stroke-width="1.500"/><circle cx="5.500" cy="4.500" r="1.500" fill="#fff" stroke="#444"/><circle cx="11" cy="19" r="1.500" fill="#fff" stroke="#444"/></symbol>
<symbol id="arcm" viewBox="0 0 24 24"><use href="#globe"/><circle cx="7" cy="17" r="5.500" fill="#ddd" stroke="#444"/><path d="M4 14l3 1v4l-2-1zM9 15l2 2-2 3z" fill="#333"/></symbol>
<symbol id="arcf" viewBox="0 0 24 24"><use href="#wfs"/><circle cx="7" cy="17" r="5.500" fill="#ddd" stroke="#444"/><path d="M4 14l3 1v4l-2-1zM9 15l2 2-2 3z" fill="#333"/></symbol>
<symbol id="geo" viewBox="0 0 24 24"><path d="M12 2v20M3.500 7l17 10M20.500 7l-17 10" stroke="#5b88b5" stroke-width="4.400" stroke-linecap="round"/><path d="M12 4v16M5 8l14 8M19 8L5 16" stroke="#86abd2" stroke-width="1.600"/></symbol>
<symbol id="flt" viewBox="0 0 24 24"><rect x="1.500" y="1.500" width="21" height="21" rx="4" fill="#f4f4f4" stroke="#777" stroke-width="2.200"/><path d="M10 11V6h8v8h-5M6 11h7v7H6z" fill="none" stroke="#666" stroke-width="1.900"/></symbol>
<symbol id="cls" viewBox="0 0 24 24"><rect x="1.500" y="1.500" width="21" height="21" rx="4" fill="#f4f4f4" stroke="#777" stroke-width="2.200"/><path d="M7 7l10 10M17 7L7 17" stroke="#555" stroke-width="4"/></symbol>
<symbol id="bulb" viewBox="0 0 24 24"><path d="M12 1q7 0 7 7 0 3-3 6v3H8v-3q-3-3-3-6 0-7 7-7z" fill="#f9f040" stroke="#cfc22a"/><path d="M8.500 17h7v3l-2 3h-3l-2-3z" fill="#666"/><circle cx="10" cy="6" r="2" fill="#fff"/></symbol>
<symbol id="nf" viewBox="0 0 24 24"><path d="M10 1v22L-1 12zM23 1v22L10 12z" fill="#d5d8da" stroke="#bfc2c4"/></symbol>
<symbol id="np" viewBox="0 0 24 24"><path d="M19 1v22L4 12z" fill="#d5d8da" stroke="#bfc2c4"/></symbol>
<symbol id="fview" viewBox="0 0 24 24"><rect x="1.500" y="1" width="21" height="22" rx="2" fill="#dbe9f8" stroke="#8eb4de"/><path d="M4 7h4M4 16h4" stroke="#444" stroke-width="1.500"/><rect x="10" y="4.500" width="10" height="5.500" rx="2" fill="#fff" stroke="#7faad8"/><rect x="10" y="13.500" width="10" height="5.500" rx="2" fill="#fff" stroke="#7faad8"/></symbol>
<symbol id="mouse" viewBox="0 0 24 24"><path d="M1 4q5-5 9 0l9 11q3 7-4 8-7 1-9-5L1 8z" fill="#444" stroke="#111"/><path d="M1 8l8-5M4 12l9-6M7 16l8-6" stroke="#fff" stroke-width="1.300"/><circle cx="14" cy="17.500" r="4" fill="#f4f4f4" stroke="#111" stroke-width="1.500"/><path d="M15 9q2-5 7-7" stroke="#222" fill="none"/></symbol>
<symbol id="lock" viewBox="0 0 24 24"><path d="M6 12V8q0-6 6-6t6 6v4" fill="none" stroke="#8b8b8b" stroke-width="2.400"/><rect x="3" y="11" width="18" height="12.500" rx="1.500" fill="#5c5c5c"/></symbol>
<symbol id="crs" viewBox="0 0 24 24"><path d="M3 4q9-6 18 0l3 8q-12 4-24 0zM2 14q10 4 20 0-3 9-10 9T2 14z" fill="#888"/><path d="M12 1v22M7 2q-4 10 1 21M17 2q4 10-1 21M1 8h22" fill="none" stroke="#eee"/></symbol>
<symbol id="msg" viewBox="0 0 24 24"><path d="M12 2q12 0 12 9 0 7-7 8l6 4q-9 0-12-4Q0 18 0 11 0 2 12 2z" fill="#666"/><circle cx="6" cy="11" r="1.800" fill="#fff"/><circle cx="12" cy="11" r="1.800" fill="#fff"/><circle cx="18" cy="11" r="1.800" fill="#fff"/></symbol>
</svg>

<div class="app">
<header class="title"><svg class="logo"><use href="#q"/></svg><span>01_2Dflat — QGIS</span>
<svg class="winbtns" viewBox="0 0 160 34"><path d="M5 16h14M144 9.500l13 14M157 9.500l-13 14" fill="none" stroke="#9a9a9a" stroke-width="1.300"/><path d="M72 12.500h10V23H72zM75 12V9.500h11v11h-3.500" fill="none" stroke="#9a9a9a" stroke-width="1.300"/></svg></header>
<nav class="menu"><span>Pro<u>j</u>ect</span><span><u>E</u>dit</span><span><u>V</u>iew</span><span><u>L</u>ayer</span><span><u>S</u>ettings</span><span><u>P</u>lugins</span><span>Vect<u>o</u>r</span><span><u>R</u>aster</span><span><u>D</u>atabase</span><span><u>W</u>eb</span><span><u>M</u>esh</span><span>Pro<u>c</u>essing</span><span><u>H</u>elp</span></nav>

<div class="bar b1"><i class="grip first"></i>
<svg class="t"><use href="#new"/></svg><svg class="t"><use href="#open"/></svg><svg class="t"><use href="#save"/></svg><svg class="t"><use href="#newlay"/></svg><svg class="t"><use href="#laymgr"/></svg><svg class="t"><use href="#style"/></svg><i class="grip"></i>
<span class="pressed"><svg class="t"><use href="#hand"/></svg></span><svg class="t"><use href="#pan"/></svg><svg class="t"><use href="#zin"/></svg><svg class="t"><use href="#zout"/></svg><svg class="t"><use href="#zfull"/></svg><svg class="t off"><use href="#zsel"/></svg><svg class="t off"><use href="#zlay"/></svg><svg class="t off"><use href="#znat"/></svg><svg class="t"><use href="#zlast"/></svg><svg class="t off"><use href="#znext"/></svg><svg class="t"><use href="#newmap"/></svg><svg class="t"><use href="#bmnew"/></svg><svg class="t"><use href="#bm"/></svg><svg class="t"><use href="#clock"/></svg><svg class="t"><use href="#refresh"/></svg><i class="grip"></i>
<svg class="t off"><use href="#ident"/></svg><svg class="t"><use href="#table"/></svg><svg class="t"><use href="#aba"/></svg><svg class="t"><use href="#gear"/></svg><svg class="t"><use href="#sum"/></svg><svg class="t"><use href="#ruler"/></svg><i class="dd"></i><svg class="t"><use href="#tip"/></svg><svg class="t off"><use href="#run"/></svg><i class="dd dim"></i><svg class="t"><use href="#tann"/></svg><i class="dd"></i><i class="grip"></i>
<svg class="t off"><use href="#sel"/></svg><i class="dd dim"></i><svg class="t"><use href="#self"/></svg><i class="dd"></i><svg class="t"><use href="#desel"/></svg><i class="dd"></i></div>

<div class="bar b2"><i class="grip first"></i>
<svg class="t"><use href="#dsm"/></svg><svg class="t"><use href="#box"/></svg><svg class="t"><use href="#vec"/></svg><svg class="t"><use href="#feather"/></svg><svg class="t"><use href="#chip"/></svg><i class="sep"></i><svg class="t"><use href="#newv"/></svg><i class="sep"></i><i class="grip"></i>
<span class="menued"><svg class="t off"><use href="#pens"/></svg><i class="dd dim"></i></span><svg class="t"><use href="#pen"/></svg><svg class="t off"><use href="#savee"/></svg><svg class="t off"><use href="#addrec"/></svg><svg class="t off"><use href="#vert"/></svg><i class="dd dim"></i><svg class="t off"><use href="#multi"/></svg><svg class="t off"><use href="#trash"/></svg><svg class="t off"><use href="#cut"/></svg><svg class="t off"><use href="#copy"/></svg><svg class="t off"><use href="#paste"/></svg><svg class="t off"><use href="#undo"/></svg><svg class="t off"><use href="#redo"/></svg><i class="grip"></i>
<svg class="t off"><use href="#tagy"/></svg><svg class="t off"><use href="#pie"/></svg><i class="sep"></i><svg class="t"><use href="#tagb"/></svg><svg class="t"><use href="#tagr"/></svg><i class="sep"></i><svg class="t"><use href="#tagyb"/></svg><svg class="t"><use href="#tage"/></svg><svg class="t"><use href="#tagm"/></svg><svg class="t"><use href="#tagt"/></svg><svg class="t"><use href="#tagp"/></svg><i class="grip"></i><svg class="t big"><use href="#bino"/></svg><i class="grip"></i><svg class="t"><use href="#py"/></svg><i class="grip"></i><svg class="t"><use href="#help"/></svg><i class="grip"></i></div>

<div class="bar b3"><i class="grip first"></i>
<svg class="t"><use href="#i3"/></svg><svg class="t fade"><use href="#broom"/></svg><svg class="t"><use href="#db"/></svg><svg class="t"><use href="#tbx"/></svg><svg class="t"><use href="#chart"/></svg><svg class="t"><use href="#mapi"/></svg><svg class="t"><use href="#sail"/></svg><svg class="t"><use href="#bal"/></svg><svg class="t"><use href="#log"/></svg><i class="grip"></i>
<span class="btn anim">Animation on</span><span class="combo"><i class="dd dim"></i></span>
<div class="slider"><b></b><s></s></div><div class="lcd"><svg viewBox="0 0 12 24"><path d="M2 1l3 2h5v8M2 4v8M10 13v9H2v-8" fill="none" stroke="#a5a5a5" stroke-width="1.200"/></svg></div>
<i class="grip"></i><i class="grip g2"></i><svg class="t pd"><use href="#pdok"/></svg><span class="field pdok">PDOK Locatieserver zoek</span><svg class="t cx"><use href="#clrx"/></svg></div>

<main class="work">
<aside class="side">
<section class="panel browser"><div class="ph"><span>Browser</span><svg><use href="#flt"/></svg><svg><use href="#cls"/></svg></div>
<div class="pt"><svg><use href="#addl"/></svg><svg><use href="#refresh"/></svg><svg><use href="#fun"/></svg><svg><use href="#treeu"/></svg><svg><use href="#info"/></svg></div>
<div class="box"><div class="tree">
<div class="r"><i></i><svg><use href="#ora"/></svg>Oracle</div>
<div class="r"><i></i><svg><use href="#db2"/></svg>DB2</div>
<div class="r"><i class="ar"></i><svg><use href="#globe"/></svg>WMS/WMTS</div>
<div class="r"><i></i><svg><use href="#vt"/></svg>Vector Tiles</div>
<div class="r"><i class="ad"></i><svg><use href="#xyz"/></svg>XYZ Tiles</div>
<div class="r l2 hl"><i></i><svg><use href="#xyz"/></svg>Google Sattelite</div>
<div class="r l2"><i></i><svg><use href="#xyz"/></svg>OpenStreetMap</div>
<div class="r"><i></i><svg><use href="#wcs"/></svg>WCS</div>
<div class="r"><i></i><svg><use href="#wfs"/></svg>WFS / OGC API - Features</div>
<div class="r"><i class="ar"></i><svg><use href="#ows"/></svg>OWS</div>
<div class="r"><i></i><svg><use href="#arcm"/></svg>ArcGIS Map Service</div>
<div class="r"><i></i><svg><use href="#arcf"/></svg>ArcGIS Feature Service</div>
<div class="r"><i></i><svg><use href="#geo"/></svg>GeoNode</div>
</div><div class="sb"><b class="up"></b><s class="s1"></s><em></em><b class="dn"></b></div></div></section>
<div class="split"></div>
<section class="panel layers"><div class="ph"><span>Layers</span><svg><use href="#flt"/></svg><svg><use href="#cls"/></svg></div>
<div class="pt"><svg><use href="#brush"/></svg><svg><use href="#grpadd"/></svg><svg><use href="#veye"/></svg><svg><use href="#fun"/></svg><svg><use href="#eps"/></svg><i class="dd"></i><svg><use href="#treed"/></svg><svg><use href="#treeu"/></svg><svg><use href="#reml"/></svg></div>
<div class="box"><div class="tree lt">
<div class="r up1"><i></i><k></k><svg><use href="#grp"/></svg>schematisation</div>
<div class="r"><i class="ad"></i><k></k><svg><use href="#grp"/></svg>settings</div>
<div class="r tb"><svg><use href="#lay"/></svg>v2_simple_infiltration</div>
<div class="r tb"><svg><use href="#lay"/></svg>v2_global_settings</div>
<div class="r tb"><svg><use href="#lay"/></svg>v2_aggregation_settings</div>
<div class="r tb"><svg><use href="#lay"/></svg>v2_interflow</div>
<div class="r tb"><svg><use href="#lay"/></svg>v2_groundwater</div>
<div class="r"><i class="ar"></i><k></k><svg><use href="#grp"/></svg>boundary conditions</div>
<div class="r"><i class="ar"></i><k></k><svg><use href="#grp"/></svg>laterals</div>
<div class="r"><i class="ar"></i><k></k><svg><use href="#grp"/></svg>1d</div>
<div class="r"><i class="ar"></i><k></k><svg><use href="#grp"/></svg>additional tables for editing 1d</div>
<div class="r"><i class="ar"></i><k></k><svg><use href="#grp"/></svg>obstacles</div>
<div class="r"><i class="ad"></i><k></k><svg><use href="#grp"/></svg>grid refinements</div>
<div class="r lg"><k></k><svg viewBox="0 0 22 22"><path d="M0 10.500h22" stroke="#5bc91f" stroke-width="2.600"/></svg>v2_grid_refinement</div>
<div class="r lg"><k></k><svg viewBox="0 0 22 22"><rect x=".7" y=".7" width="20.600" height="20.600" fill="#e8f5e9"/><rect x=".7" y=".7" width="20.600" height="20.600" fill="url(#hg)" stroke="#2e6e42" stroke-width="1.400"/></svg>v2_grid_refinement_area</div>
<div class="r"><i class="ad"></i><k></k><svg><use href="#grp"/></svg>advanced numerics</div>
<div class="r tb cur"><svg><use href="#layb"/></svg><u>v2_numerical_settings</u></div>
<div class="r lg"><k></k><svg viewBox="0 0 22 22"><rect x=".7" y=".7" width="20.600" height="20.600" fill="#f5e5fb"/><rect x=".7" y=".7" width="20.600" height="20.600" fill="url(#hp)" stroke="#6d2e84" stroke-width="1.400"/></svg>v2_dem_average_area</div>
<div class="r"><i class="ar"></i><k></k><svg><use href="#grp"/></svg>inflow</div>
<div class="r last"><k></k><svg viewBox="0 0 20 20"><path d="M0 0h20v20H0z" fill="#b9cde6"/><path d="M0 0h6v6H0zM14 0h6v6h-6z" fill="#2d3f58"/></svg>dem 0 cal BR</div>
</div><div class="sb"><b class="up"></b><s class="s2"></s><em></em><s class="s3"></s><b class="dn"></b></div></div></section>
</aside>

<div class="canvas">
<svg class="map" viewBox="490 219 1754 945" preserveAspectRatio="none">
<defs>
<filter id="soft"><feGaussianBlur stdDeviation="6"/></filter><filter id="soft2"><feGaussianBlur stdDeviation="1.600"/></filter>
<filter id="tex" x="0" y="0" width="100%" height="100%"><feTurbulence type="fractalNoise" baseFrequency=".13 .11" numOctaves="3" seed="4"/><feColorMatrix values="0 0 0 0 0  0 0 0 0 0  0 0 0 0 0  0 1.600 0 0 -.6"/></filter>
<filter id="rough" x="-5%" y="-5%" width="110%" height="110%"><feTurbulence type="fractalNoise" baseFrequency=".05" numOctaves="2" seed="8"/><feDisplacementMap in="SourceGraphic" scale="9" xChannelSelector="R" yChannelSelector="G"/></filter>
<filter id="warp" x="-3%" y="-30%" width="106%" height="160%"><feTurbulence type="fractalNoise" baseFrequency=".012 .02" numOctaves="3" seed="3"/><feDisplacementMap in="SourceGraphic" scale="75" xChannelSelector="R" yChannelSelector="G"/></filter>
<pattern id="hedge" width="110" height="70" patternUnits="userSpaceOnUse" y="200"><path d="M0 0h34v30h28V0h48v42H62v28M0 38h34v32M62 30v12M86 42v28M34 30v10M14 0v38" fill="none" stroke="#16302a" stroke-width="1.700" opacity=".75"/><path d="M34 0h28v30H34z" fill="#5d7359" opacity=".35"/><path d="M62 42h24v28H62z" fill="#1c4c42" opacity=".6"/><path d="M0 38h34v32H0z" fill="#2f7460" opacity=".4"/></pattern>
<linearGradient id="sea" x1="0" y1="0" x2="0" y2="1"><stop offset="0" stop-color="#2f4f60"/><stop offset=".4" stop-color="#3c577c"/><stop offset="1" stop-color="#425c8a"/></linearGradient>
<linearGradient id="lf" x1="0" y1="0" x2="0" y2="1"><stop offset="0" stop-color="#24584a"/><stop offset=".2" stop-color="#21493f"/><stop offset=".45" stop-color="#2d4a42"/><stop offset=".7" stop-color="#545950"/><stop offset=".8" stop-color="#14403f"/><stop offset=".92" stop-color="#12393c"/><stop offset="1" stop-color="#2f4f6c"/></linearGradient>
</defs>
<rect x="490" y="219" width="1754" height="945" fill="#28594b"/>
<rect x="490" y="219" width="24" height="945" fill="url(#lf)"/>
<rect x="460" y="180" width="1300" height="140" fill="url(#hedge)" filter="url(#warp)"/>
<g filter="url(#rough)">
<path d="M757 285l20-30 40-20 20 10 15 40z" fill="#7c6d58"/><path d="M800 270l40-10 15 25h-55z" fill="#5d4038"/><path d="M880 212h30l-10 47-20 26h-20z" fill="#6d6552"/><path d="M955 212h105l-3 57-30 5-70-50z" fill="#236551"/><path d="M1073 212h25l20 42 12 30-20-20-36-20z" fill="#63433a"/><path d="M1098 212h32v73l-15-30z" fill="#907360"/><path d="M1130 212h70l-20 47-40 22z" fill="#54705a"/><path d="M1220 212h20l-60 73h-30z" fill="#1b322f"/><path d="M1245 212h45l5 67-60 6-10-30z" fill="#246650"/><path d="M1305 212h45l-15 73h-30z" fill="#286150"/><path d="M1475 212h50l10 73h-60z" fill="#42705a" opacity=".8"/><path d="M1520 212h30l-10 67-20-20z" fill="#69725a"/><path d="M1545 228l50-7 50 35-20 29h-50l-35-30z" fill="#1d5f4e"/><path d="M1705 212h30l-30 73h-35z" fill="#6c5e4d"/><path d="M1760 212h25l-20 67h-25z" fill="#31776a"/>
</g>
<path d="M570 219l-8 14 8 26M1020 219l6 40v24M1410 219l25 30 8 30M1660 219l24 26 8 38M1750 240l-20 44M950 250l10 34" fill="none" stroke="#9aa29a" stroke-width="3.500" stroke-dasharray="4 2 2 3" opacity=".7" filter="url(#rough)"/>
<path d="M580 260l120-10M690 219l24 64M1545 228l30 55M1595 219l-20 64M1600 255l50-8M1490 219l14 64M1500 250l40-10" fill="none" stroke="#16302a" stroke-width="1.800" opacity=".8"/>
<path d="M1800 210h125l-20 19-40 50-6 5h-80z" fill="#6b6860" filter="url(#soft2)"/><path d="M1860 219l-20 30 10 10-40 24M1885 219l-30 60" fill="none" stroke="#85817a" stroke-width="3" opacity=".6" filter="url(#soft2)"/><path d="M1925 210h20l-75 73h-20z" fill="#4c4c43" filter="url(#soft2)"/><path d="M1945 210h30v75h-100z" fill="#27544d" filter="url(#soft2)"/>
<path d="M1971 215h273v364H1985z" fill="#32532f"/>
<g filter="url(#rough)"><path d="M1990 212h28l-20 47-16 5-8-20z" fill="#75664b"/><path d="M2015 212h28l-8 87-30-40z" fill="#7e8159"/><path d="M2045 212h70l-70 67z" fill="#2c5c2f"/><path d="M2080 262l40-24 30 50-35 40-60-40z" fill="#21512a"/><path d="M2130 225h60l-15 30-60 12z" fill="#4e653b"/><path d="M2110 305l35-35 40 60-10 45-55-10z" fill="#45663f"/><path d="M2150 285l40-2 35 50-35 35-22-30z" fill="#1a4a2b"/><path d="M2055 340l60-10 15 45-50 8z" fill="#284a3a"/><path d="M2160 370l50-20 20 30-45 30z" fill="#67704b"/><path d="M2190 212h54v67l-30-10z" fill="#2b5628"/><path d="M2080 440l30-12 35 10-15 25-50-10z" fill="#83755a"/><path d="M1995 390l20-5-5 30-20 10z" fill="#6c6f50"/><path d="M2160 460l40 4 20 20-55 20z" fill="#6a6b48"/><path d="M2200 430l50-10v80h-45z" fill="#50653d"/><path d="M2200 490l40 3v12l-35 8z" fill="#7c6d50"/><path d="M1990 425l60-5 30 25 60 30 104 65v40l-90-45-60-40-100-30z" fill="#1f4425"/></g>
<path d="M2000 270l40 15 30 40 50-35 30-20 40 15 54-20M2075 330l50 50 60-10 59-40M2000 350l70-25M2045 400l40-20 50 20 30 40 70-10M2120 240l5 30M2190 219l-20 70M2020 380l50-10M2040 340v60" fill="none" stroke="#1d3a22" stroke-width="2" opacity=".8" filter="url(#rough)"/>
<path d="M2155 375q30 15 50 40t40 30" fill="none" stroke="#1b3d22" stroke-width="9" filter="url(#rough)"/>
<path d="M2145 283l18-6 3 6-18 8zM2022 375l12-12 6 6-10 14zM2085 420l15-5 3 4-14 6zM2225 336l10-4 3 6-12 3zM2225 486l14-4 2 4-12 4z" fill="#9b9a92" filter="url(#rough)"/>
<path d="M1985 453q40-16 75-6 60 22 80 28 15 30 70 52l38 38v600h-263z" fill="#65614f"/>
<g filter="url(#soft2)"><path d="M1985 450q60-20 110 8t45 18l20 30 84 55v22q-60-15-100-50-60-50-159-60z" fill="#5b5950"/>
<path d="M1990 456q60-20 130 28l100 60" stroke="#4a4d42" stroke-width="5" fill="none" opacity=".8"/><path d="M2000 490q60 20 120 20l60 30" stroke="#525246" stroke-width="10" fill="none" opacity=".6"/>
<path d="M2048 570q10-28 90-25 70 10 108 30v110q-80-50-120-60-60-15-78-55z" fill="#6c6757"/>
<path d="M2055 582q-15-30 50-36t130 24" stroke="#837b69" stroke-width="2.500" fill="none"/>
<path d="M1985 570q60 10 110 50l130 50q20 50 20 90t-25 75q-30 30-50 60" stroke="#4c5347" stroke-width="16" fill="none"/><path d="M1988 585q60 20 110 65l60 35 20 60-40-45-30-10-120-60z" fill="#545545"/>
<path d="M2215 690q24 35 13 80-10 30-40 50-20 15-10 60" fill="none" stroke="#827966" stroke-width="4" opacity=".6"/>
<path d="M2106 760q30-20 10-45-10-10-28-15l15-8q45 20 75 60-10-30-40-55l40 0q35 35 40 60-5 40-65 90-60 30-163 73v-50l70-25z" fill="#746b57"/><path d="M2155 780q40 20 50 10l-20 40q-40 10-60 5z" fill="#5e5c4e" opacity=".7"/>
<path d="M2098 743q28-13 14-32-8-10-22-10 20-14 35 8 6 22-3 38l-12 18z" fill="#b3a084"/>
<path d="M2050 700q-10-25 30-20 20 15 26 18-18 0-24 12-5 12 14 20-10 8-22-1z" fill="#505142"/></g>
<g filter="url(#soft)"><path d="M1985 930q90-30 170-80l30-18-5 60 30 40 40 10v220h-265z" fill="#3e5147"/><path d="M1985 960q100-50 180-10 40 0 80-20v240h-265z" fill="#3e4a38"/></g><g filter="url(#soft2)"><path d="M2120 905q40-50 90-80l10 8q-40 60-60 70l-25 14z" fill="#615e50"/><path d="M2180 940q0-60 64-110v90z" fill="#5a5a4c"/></g>
<path d="M1985 618l80 80 36 62 6 7v21l-47 66-75 26z" fill="#080808"/><path d="M1991 620l38 24 36 36v20z" fill="#080808"/>
<g><rect x="514" y="1074" width="1480" height="94" fill="#6a6b60"/><path d="M490 1080h905q5 50 15 84H490z" fill="url(#sea)" filter="url(#soft2)"/><path d="M1170 1100h225l10 64h-235z" fill="#4b5a8c" opacity=".6" filter="url(#soft)"/>
<path d="M1390 1080h60l-50 30z" fill="#35524f" filter="url(#soft)"/><path d="M1450 1164q20-50 70-55 40 10 30 40l-40 20z" fill="#3b534c" filter="url(#soft)"/><path d="M1560 1146l60-34 55-32h155l-20 25-100 30-60 30h-100z" fill="#39504c" filter="url(#soft2)"/><path d="M1820 1080h15q-10 60 30 84h-20q-20-20-25-84z" fill="#34524b" filter="url(#soft2)"/><path d="M1820 1080h130v25l-80 2z" fill="#425c57" filter="url(#soft)"/><path d="M1410 1148l150 0 380 14v4h-530z" fill="#213f3d" filter="url(#soft2)"/><path d="M1555 1140l80-45 45-15" fill="none" stroke="#95948a" stroke-width="2"/>
<g filter="url(#soft)"><path d="M1985 1030h270v144h-310v-100z" fill="#5b5646"/><path d="M1985 990h265v30l-110 150h-70l20-90-105-20z" fill="#3d4735"/><path d="M2250 1000v170h-90q20-90 90-170z" fill="#605c4b"/><path d="M1945 1138l60 10-5 20h-55z" fill="#2f3e31"/></g></g>
<rect x="490" y="219" width="1754" height="945" filter="url(#tex)" opacity=".2"/>
<g class="wm"><text x="650" y="1093">© 2020 Google</text><text x="820" y="1099">© 2020 Google</text><text x="1346" y="1103">© 2020 Google</text><text x="1490" y="1108">© 2020 Google</text><text x="1818" y="1119">© 2020 Google</text><text x="1970" y="1139">© 2020 Google</text><text x="2030" y="614">© 2020 Google</text><text x="2182" y="932">© 2020 Go</text></g>
</svg>

<section class="dlg">
<header><svg><use href="#q"/></svg><span>v2_numerical_settings — Features Total: 1, Filtered: 1, Selected: 0</span><svg class="db" viewBox="0 0 170 43"><path d="M6 20.500h15M143 14l14 13M157 14l-14 13" fill="none" stroke="#222" stroke-width="1.400"/><rect x="75" y="14" width="13" height="13" fill="none" stroke="#222" stroke-width="1.400"/></svg></header>
<div class="dt"><svg><use href="#pen"/></svg><svg class="off"><use href="#multi"/></svg><svg class="off"><use href="#savee"/></svg><svg><use href="#refresh"/></svg><i></i><svg class="off"><use href="#addrec"/></svg><svg class="off"><use href="#trash"/></svg><svg class="off"><use href="#cut"/></svg><svg class="off"><use href="#copy"/></svg><svg class="off"><use href="#paste"/></svg><i></i><svg><use href="#epss"/></svg><svg><use href="#selall"/></svg><svg><use href="#inv"/></svg><svg><use href="#dsl"/></svg><svg><use href="#fun"/></svg><svg><use href="#mtop"/></svg><svg><use href="#pan"/></svg><svg><use href="#zys"/></svg><i></i><svg class="off"><use href="#form"/></svg><svg class="off"><use href="#form"/></svg><svg><use href="#fedit"/></svg><svg><use href="#aba"/></svg><i></i><svg><use href="#cond"/></svg><i></i><svg><use href="#dock"/></svg><svg><use href="#run"/></svg></div>
<div class="dm">
<div class="dl"><div class="ex"><svg><use href="#epsm"/></svg><span>Expression</span><i class="dd"></i></div>
<div class="list"><div class="li"><k class="e"></k>1</div></div>
<div class="nav"><svg class="a"><use href="#nf"/></svg><svg class="a"><use href="#np"/></svg><svg class="a fl"><use href="#np"/></svg><svg class="a fl"><use href="#nf"/></svg><span>1 / 1</span><b><svg><use href="#bulb"/></svg></b><svg class="p4"><use href="#arr4"/></svg><svg class="mg"><use href="#mag"/></svg></div></div>
<div class="dr"><div class="tabs"><span class="on">General</span><span>Limiters</span><span>Matrix</span><span>Thresholds</span><span>Miscellaneous</span></div><div class="pane"><span>id</span><span>1</span></div></div>
</div>
<footer><span class="btn saf"><svg><use href="#fun"/></svg>Show All Features<i class="dd"></i></span><span class="vw"><b><svg><use href="#fview"/></svg></b><svg><use href="#table"/></svg></span></footer>
</section>
</div>
</main>

<footer class="status"><span class="field loc"><svg viewBox="0 0 16 16"><circle cx="6.500" cy="6.500" r="5" fill="none" stroke="#888" stroke-width="1.300"/><path d="M10 10l5 5" stroke="#888" stroke-width="1.600"/></svg>Type to locate (Ctrl+K)</span>
<span class="lb c1">Coordinate</span><span class="field f1">228186,205236</span><svg class="si s1"><use href="#mouse"/></svg><span class="lb c2">Scale</span><span class="field f2">1:36790<i class="dd"></i></span><svg class="si s2"><use href="#lock"/></svg><span class="lb c3">Magnifier</span><span class="field f3">100%<em class="spin"></em></span><span class="lb c4">Rotation</span><span class="field f4">0.0 °<em class="spin"></em></span><k></k><span class="lb c5">Render</span><svg class="si s3"><use href="#crs"/></svg><span class="lb c6">EPSG:27700</span><svg class="si s4"><use href="#msg"/></svg></footer>
<div class="task"><i></i></div>
</div>

<svg class="notes" viewBox="0 0 2246 1205">
<g fill="none" stroke="#f00" stroke-linejoin="round"><path d="M820.500 354.500h1164v685h-1164z" stroke-width="7"/><path d="M507.500 326h43v39h-43zM634 323.500h43v43h-43z" stroke-width="8"/><path d="M3 1076.500h455v30.500H3z" stroke-width="6.500" stroke-linejoin="miter"/>
<path d="M592 250l-33 60M778 240l-86 63M519 1004l-42 50M896 996l-55 34" stroke-width="5.500"/></g>
<g fill="#f00"><path d="M550 299l24 13-22 14z"/><path d="M675 320l12-26 15 19z"/><path d="M461 1073l5-30 23 19z"/><path d="M822 1041l14-26 14 23z"/></g>
<g fill="#fff" stroke="#f00" stroke-width="12" stroke-linejoin="round"><path d="M595 159h96v86h-96zM780 151h96v86h-96zM519 915h96v86h-96zM899 906h97v86h-97z"/></g>
<g class="num"><text x="642" y="228">2</text><text x="827" y="220">3</text><text x="567" y="984">1</text><text x="946" y="975">4</text></g>
</svg>
</body>
</html>
```
FILE: styles.css
```css
* { box-sizing: border-box; }
body { margin: 0; width: 2246px; height: 1205px; overflow: hidden; position: relative; background: #fff; font-family: "Noto Sans", "Open Sans", sans-serif; font-size: 16px; color: #111; }
svg { display: block; flex: none; overflow: visible; }
.paints { position: absolute; }
.defs { display: none; }
i, em, s, b { font-style: normal; text-decoration: none; font-weight: normal; }
.app { display: flex; flex-direction: column; height: 1205px; padding-left: 3px; }
.title { height: 34px; display: flex; align-items: center; color: #999; font-size: 16.5px; letter-spacing: .08px; padding-left: 3px; flex: none; }
.logo { width: 23px; height: 23px; margin-right: 6px; }
.winbtns { width: 160px; height: 34px; margin-left: auto; margin-right: 27px; }
.menu { height: 29px; background: #efefef; border-bottom: 1.500px solid #d5d5d5; display: flex; align-items: center; gap: 17.200px; padding-left: 13px; color: #9a9a9a; font-size: 16.400px; flex: none; }
.menu u { text-underline-offset: 2px; }
.bar { display: flex; align-items: center; background: linear-gradient(#fafafa, #ededed); border-bottom: 2px solid #c6c6c6; flex: none; }
.b1 { height: 46px; }
.b2 { height: 45px; }
.b3 { height: 65px; }
.t { width: 38.5px; height: 26px; }
.t.big { height: 30px; }
.off { opacity: .38; filter: grayscale(.7); }
.fade { opacity: .7; }
.grip { width: 21.5px; height: 22px; flex: none; background: radial-gradient(circle, #aaa 0 .8px, transparent 1px) 10px 0 / 4px 4px repeat-y, radial-gradient(circle, #aaa 0 .8px, transparent 1px) 14px 0 / 4px 4px repeat-y; }
.grip.first { width: 17.500px; background-position: 7px 0, 11px 0; }
.sep { width: 8.5px; height: 34px; border-left: 1.500px solid #d2d2d2; margin-left: 4px; margin-right: -4px; flex: none; }
.dd { width: 17.5px; flex: none; display: flex; justify-content: center; }
.dd::after { content: ""; border: 5.500px solid transparent; border-top: 6px solid #4c4c4c; border-bottom: 0; }
.dd.dim::after { border-top-color: #9d9d9d; }
.pressed { height: 36px; display: flex; align-items: center; background: #dedede; border: 1px solid #aaa; border-radius: 3px; width: 38.5px; }
.pressed .t { margin-left: -1px; }
.menued { display: flex; align-items: flex-end; }
.menued .dd { margin-left: -17px; width: 17px; }
.btn { border: 1.500px solid #b3b3b3; border-radius: 3px; background: linear-gradient(#fff, #f0f0f0); }
.anim { width: 98px; height: 29px; margin-left: 13px; font-size: 14.200px; letter-spacing: -.25px; line-height: 26px; text-align: center; white-space: nowrap; flex: none; }
.combo { width: 88px; height: 28px; margin-left: 8px; border: 1px solid #c4c4c4; border-radius: 3px; display: flex; align-items: center; justify-content: flex-end; padding-right: 10px; flex: none; }
.slider { display: flex; align-items: center; width: 860px; margin-left: 111px; flex: none; }
.slider b { width: 19px; height: 19px; border: 1px solid #999; border-radius: 4px; background: #fff; }
.slider s { flex: 1; height: 8px; border: 1.500px solid #a9a9a9; border-left: 0; border-radius: 0 3px 3px 0; background: #d5d5d5; }
.lcd { width: 116px; height: 54px; margin-left: 4px; border: 1.500px solid #a2a2a2; border-right-color: #bbb; border-bottom-color: #bbb; display: flex; align-items: center; justify-content: flex-end; padding-right: 6px; flex: none; }
.lcd svg { width: 12px; height: 24px; }
.lcd + .grip { margin-left: 1px; }
.g2 { margin-left: 38px; }
.pd { width: 38px; height: 27px; margin-left: -1px; }
.field { border: 1.500px solid #b9b9b9; border-radius: 3px; background: #fff; display: flex; align-items: center; white-space: nowrap; flex: none; }
.pdok { width: 233px; height: 28px; color: #777; font-size: 14.200px; padding-left: 3px; margin-left: 2px; }
.cx { width: 45px; }
.work { flex: 1; min-height: 0; display: flex; }
.side { width: 487px; background: #efefef; display: flex; flex-direction: column; border-left: 1px solid #d8d8d8; border-right: 2px solid #e2e2e2; }
.panel { display: flex; flex-direction: column; }
.browser { height: 394px; flex: none; }
.layers { flex: 1; min-height: 0; }
.ph { display: flex; height: 24px; align-items: center; gap: 4px; padding: 0 8px 0 4px; font-size: 16.500px; letter-spacing: -.4px; flex: none; }
.ph span { flex: 1; }
.ph svg { width: 13px; height: 13px; margin-top: -2px; }
.pt { height: 34px; display: flex; align-items: center; gap: 10.200px; padding: 0 0 4px 8px; flex: none; }
.pt svg { width: 19px; height: 19px; }
.pt .dd { width: 13px; margin: 0 -3px 0 -5px; }
.box { flex: 1; min-height: 0; width: 477px; border: 1px solid #b5b5b5; background: #fff; display: flex; overflow: hidden; }
.tree { flex: 1; overflow: hidden; }
.r { height: 25.67px; display: flex; align-items: center; padding-left: 7px; white-space: nowrap; letter-spacing: .03px; font-size: 16.800px; }
.r > i { width: 13px; margin-right: 12px; flex: none; display: flex; justify-content: center; }
.r > svg { width: 24px; height: 24px; margin-right: 7px; }
.ar::after { content: ""; border: 5.500px solid transparent; border-left: 6.500px solid #5a5a5a; border-right: 0; }
.ad::after { content: ""; border: 5.500px solid transparent; border-top: 6.500px solid #5a5a5a; border-bottom: 0; }
.l2 { padding-left: 36px; width: 263px; }
.hl, .cur { background: #efefef; }
.sb { width: 20px; flex: none; border-left: 1px solid #b9b9b9; display: flex; flex-direction: column; }
.sb b { height: 20px; display: flex; align-items: center; justify-content: center; background: #fafafa; flex: none; }
.up { border-bottom: 1px solid #bbb; }
.dn { border-top: 1px solid #bbb; }
.up::after { content: ""; border: 5.500px solid transparent; border-bottom: 6px solid #555; border-top: 0; }
.dn::after { content: ""; border: 5.500px solid transparent; border-top: 6px solid #555; border-bottom: 0; }
.sb s { background: #e4e4e4; flex: none; }
.sb em { flex: 1; border: 1px solid #bbb; border-width: 1px 0; background: linear-gradient(90deg, #f4f4f4, #fff); }
.s1 { height: 179px; }
.sb .s2 { height: 29px; }
.s3 { height: 68px; }
.split { height: 10px; flex: none; background: radial-gradient(circle, #bbb 0 .8px, transparent 1px) 230px 3px / 4px 4px no-repeat, radial-gradient(circle, #bbb 0 .8px, transparent 1px) 236px 3px / 4px 4px no-repeat, radial-gradient(circle, #bbb 0 .8px, transparent 1px) 242px 3px / 4px 4px no-repeat; }
.lt { margin-top: -14.500px; margin-bottom: -12px; }
.lt .r { padding-left: 66px; }
.lt .r > svg { width: 20px; height: 20px; margin-right: 9px; }
.lt .r > i { margin-right: 12px; }
k { width: 20px; height: 20px; border: 1.500px solid #b5b5b5; background: #fff; margin-right: 9px; flex: none; display: flex; align-items: center; justify-content: center; }
k::after { content: ""; width: 6px; height: 12px; border: solid #111; border-width: 0 2.300px 2.300px 0; transform: translateY(-2px) rotate(38deg) skewY(8deg); }
.lt .r.up1 { padding-left: 37px; }
.lt .tb { padding-left: 120px; font-weight: bold; letter-spacing: -.23px; }
.lt .tb > svg { width: 24px; height: 24px; margin-right: 6px; }
.lt .lg { padding-left: 120px; font-weight: bold; letter-spacing: -.23px; }
.lt .lg k { margin-right: 7px; }
.lt .lg > svg { width: 22px; height: 22px; margin-right: 7px; }
.lt .last { padding-left: 32px; font-weight: bold; }
.canvas { flex: 1; position: relative; min-width: 0; border-right: 2px solid #e5e5e5; }
.map { width: 100%; height: 100%; position: absolute; overflow: hidden; }
.wm { font-size: 12px; fill: #cdd8dd; opacity: .16; }
.dlg { position: absolute; left: 20px; top: 62px; width: 1480px; height: 802px; background: #efefef; border: 1px solid #555; box-shadow: 2px 4px 14px #0009; display: flex; flex-direction: column; }
.dlg header { height: 43px; background: #fff; display: flex; align-items: center; flex: none; font-size: 16.500px; letter-spacing: -.03px; }
.dlg header svg:first-child { width: 23px; height: 23px; margin: 0 8px 0 9px; }
.dlg header .db { width: 170px; height: 43px; margin-left: auto; margin-right: 15px; }
.dt { height: 34px; display: flex; align-items: center; padding: 0 0 2px 8px; flex: none; gap: 11px; }
.dt svg { width: 18.200px; height: 18px; }
.dt i { width: 1px; height: 14px; margin-right: -1.800px; background: #fff; flex: none; }
.dm { flex: 1; min-height: 0; display: flex; }
.dl { width: 300px; display: flex; flex-direction: column; flex: none; }
.ex { height: 36px; display: flex; align-items: center; padding: 0 0 0 7px; font-size: 14.500px; letter-spacing: -.2px; flex: none; }
.ex svg { width: 20px; height: 20px; margin-right: 6px; margin-top: -2px; }
.ex .dd { margin: 14px 0 0 auto; }
.list { width: 299px; height: 614px; border: 1.500px solid #b9b9b9; border-left: 0; background: #fff; flex: none; }
.li { height: 28px; background: #efefef; display: flex; align-items: center; padding-left: 4px; font-size: 16px; }
.li .e { width: 16px; height: 16px; margin-right: 13px; margin-top: -2px; background: #f2f2f2; border-color: #999; }
.e::after { display: none; }
.nav { height: 36px; display: flex; align-items: center; padding-left: 4px; flex: none; }
.nav .a { width: 20px; height: 20px; margin-right: 8.500px; }
.nav .fl { transform: scaleX(-1); }
.nav .a:nth-child(4) { margin-right: 5px; }
.nav span { width: 59px; font-size: 20px; word-spacing: 2.500px; white-space: nowrap; }
.nav b, .vw b { width: 33px; height: 32px; border: 1.500px solid #ababab; border-radius: 3px; background: #dcdcdc; display: flex; align-items: center; justify-content: center; flex: none; }
.nav b svg { width: 24px; height: 24px; }
.p4 { width: 22px; height: 22px; margin-left: 29px; }
.mg { width: 23px; height: 23px; margin-left: 12px; }
.dr { flex: 1; margin: 2px 0 3px 6px; border-top: 2px solid #b9b9b9; padding: 14px 15px 15px 13px; display: flex; flex-direction: column; min-width: 0; }
.tabs { display: flex; align-items: flex-end; height: 34px; margin-bottom: -1px; flex: none; position: relative; }
.tabs span { height: 32px; line-height: 29px; border: 1.500px solid #bcbcbc; border-left-width: 0; background: linear-gradient(#f0f0f0, #e6e6e6); font-size: 14.500px; text-align: center; letter-spacing: -.15px; border-radius: 3px 3px 0 0; width: 87px; }
.tabs span:nth-child(3) { width: 76px; }
.tabs span:nth-child(4) { width: 109px; }
.tabs span:nth-child(5) { width: 126px; }
.tabs .on { height: 34px; background: #fdfdfd; border-left-width: 1.500px; border-bottom-color: #fdfdfd; line-height: 33px; width: 88px; }
.pane { flex: 1; border: 1.500px solid #b9b9b9; background: #fdfdfd; padding: 30px 0 0 26px; font-size: 14.500px; display: flex; gap: 10px; }
.dlg footer { height: 37px; display: flex; justify-content: space-between; padding: 2px 8px 0 3px; flex: none; }
.saf { width: 168px; height: 31px; display: flex; align-items: center; font-size: 14.600px; padding-left: 6px; white-space: nowrap; }
.saf svg { width: 21px; height: 21px; margin-right: 6px; }
.saf .dd { margin: 12px 0 0 -3px; width: 11px; }
.vw { display: flex; align-items: center; gap: 5px; height: 31px; }
.vw svg { width: 22px; height: 22px; }
.status { height: 38px; background: #efefef; border-top: 1px solid #c5c5c5; display: flex; align-items: center; padding-left: 5px; font-size: 14.500px; letter-spacing: -.25px; flex: none; }
.status > * { flex: none; }
.loc { width: 270px; height: 28px; color: #777; padding-left: 8px; font-size: 14.500px; letter-spacing: 0; }
.loc svg { width: 15px; height: 15px; margin-right: 10px; }
.c1 { margin-left: 915px; width: 77px; }
.status .field { height: 27px; padding-left: 6px; }
.f1 { width: 119px; }
.si { height: 22px; width: 22px; }
.s1.si { margin-left: 6px; }
.c2 { margin-left: 16px; width: 41px; }
.f2 { width: 107px; padding-left: 4px; }
.f2 .dd { margin-left: auto; margin-right: 8px; }
.si.s2 { margin-left: 12px; height: 22px; }
.c3 { margin-left: 11px; width: 65px; }
.f3 { width: 108px; }
.f4 { width: 102px; }
.c4 { margin-left: 11px; width: 65px; }
.status k { margin: 0 8px 0 9px; }
.c5 { width: 67px; }
.c6 { margin-left: 6px; width: 106px; }
.spin { margin-left: auto; width: 20px; height: 100%; border-left: 1px solid #bbb; display: flex; flex-direction: column; justify-content: center; align-items: center; gap: 4px; }
.spin::before { content: ""; border: 5px solid transparent; border-bottom: 6px solid #555; border-top: 0; }
.spin::after { content: ""; border: 5px solid transparent; border-top: 6px solid #555; border-bottom: 0; }
.task { height: 2px; background: #223b4c; padding-left: 70px; flex: none; }
.task i { display: block; width: 502px; height: 2px; background: #dcdcdc; }
.notes { position: absolute; left: 0; top: 0; width: 2246px; height: 1205px; }
.num { font: 76px "DejaVu Sans", sans-serif; text-anchor: middle; }
```
